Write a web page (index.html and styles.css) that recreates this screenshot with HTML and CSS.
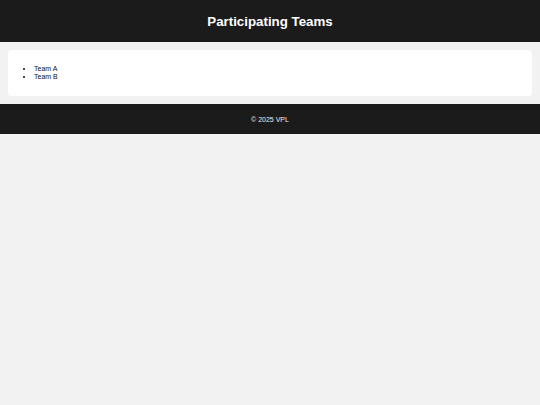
FILE: index.html
```html
<!DOCTYPE html>
<html lang="en">
<head>
  <meta charset="UTF-8">
  <meta name="viewport" content="width=device-width, initial-scale=1.0">
  <title>Participating Teams</title>
  <link rel="stylesheet" href="styles.css">
</head>
<body>
  <!-- Page Header -->
  <header class="site-header">
    <h1>Participating Teams</h1>
  </header>

  <!-- Team List -->
  <main class="content">
    <section class="card">
      <ul class="team-list">
        <li>Team A</li>
        <li>Team B</li>
      </ul>
    </section>
  </main>

  <!-- Footer -->
  <footer class="site-footer">
    <p>&copy; 2025 VPL</p>
  </footer>
</body>
</html>
```

FILE: styles.css
```css
/* Basic Reset */
* {
  margin: 0;
  padding: 0;
  box-sizing: border-box;
}

body {
  background-color: #f2f2f2;
  font-family: "Liberation Sans", Arial, sans-serif;
  color: #111;
}

/* Header */
.site-header {
  background-color: #1b1b1b;
  color: white;
  height: 42px;
  display: flex;
  justify-content: center;
  align-items: center;
}

.site-header h1 {
  font-size: 13.3px;
  font-weight: bold;
}

/* Content */
.content {
  padding: 8px;
}

.card {
  background-color: white;
  border-radius: 4px;
  padding: 15px 10px;
  height: 46px;
}

.team-list {
  padding-left: 16px;
  font-size: 7px;
  line-height: 7.5px;
}

/* Footer */
.site-footer {
  background-color: #1b1b1b;
  color: #eee;
  height: 30px;
  display: flex;
  justify-content: center;
  align-items: center;
  font-size: 7px;
}
```
